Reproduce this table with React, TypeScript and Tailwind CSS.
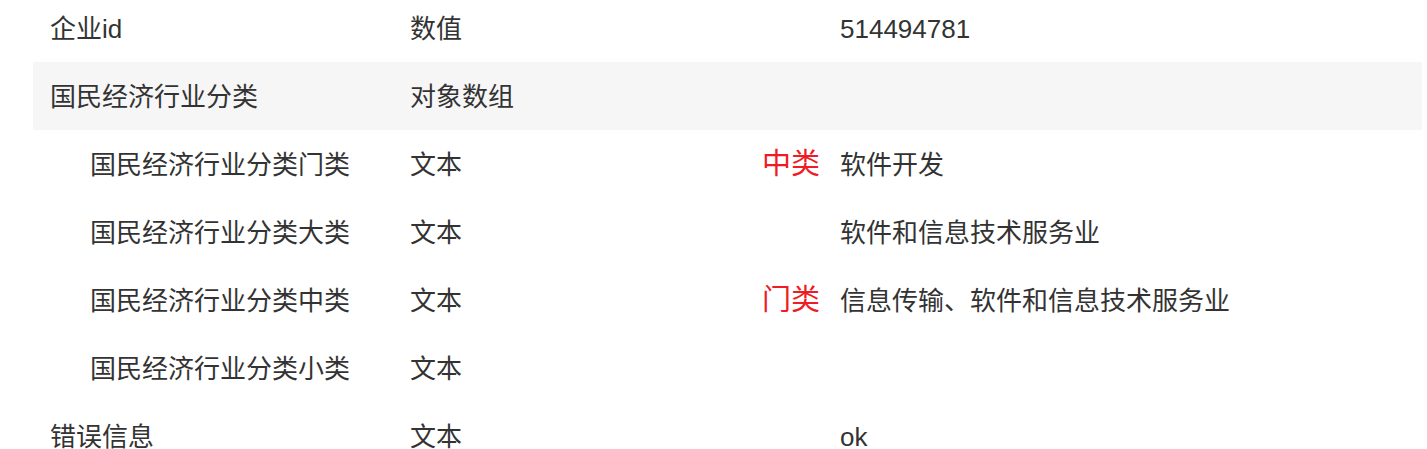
import React from "react";

interface FieldRow {
  name: string;
  type: string;
  value?: string;
  tag?: string;
  nested?: boolean;
  shaded?: boolean;
}

const rows: FieldRow[] = [
  { name: "企业id", type: "数值", value: "514494781" },
  { name: "国民经济行业分类", type: "对象数组", shaded: true },
  { name: "国民经济行业分类门类", type: "文本", value: "软件开发", tag: "中类", nested: true },
  { name: "国民经济行业分类大类", type: "文本", value: "软件和信息技术服务业", nested: true },
  { name: "国民经济行业分类中类", type: "文本", value: "信息传输、软件和信息技术服务业", tag: "门类", nested: true },
  { name: "国民经济行业分类小类", type: "文本", nested: true },
  { name: "错误信息", type: "文本", value: "ok" },
];

const App: React.FC = () => {
  return (
    <div className="w-[1427px] h-[449px] overflow-hidden bg-white">
      <div
        className="ml-[33px] mt-[-6px] w-[1389px] text-[26px] text-[#333333]"
        style={{ fontFamily: '"Liberation Sans", "Noto Sans CJK SC", sans-serif' }}
      >
        {rows.map((row, index) => (
          <div
            key={index}
            className={`grid grid-cols-[360px_430px_1fr] h-[68px] items-center pt-[2px] ${row.shaded ? "bg-[#f6f6f6]" : ""}`}
          >
            {/* Nazwa pola */}
            <div className={row.nested ? "pl-[57px]" : "pl-[17px]"}>{row.name}</div>

            {/* Typ + etykieta */}
            <div className="flex items-center pl-[17px] pr-[3px]">
              <span>{row.type}</span>
              {row.tag && <span className="ml-auto text-[29px] text-[#ee1c25]">{row.tag}</span>}
            </div>

            {/* Wartość */}
            <div className="pl-[17px]">{row.value}</div>
          </div>
        ))}
      </div>
    </div>
  );
};

export default App;
